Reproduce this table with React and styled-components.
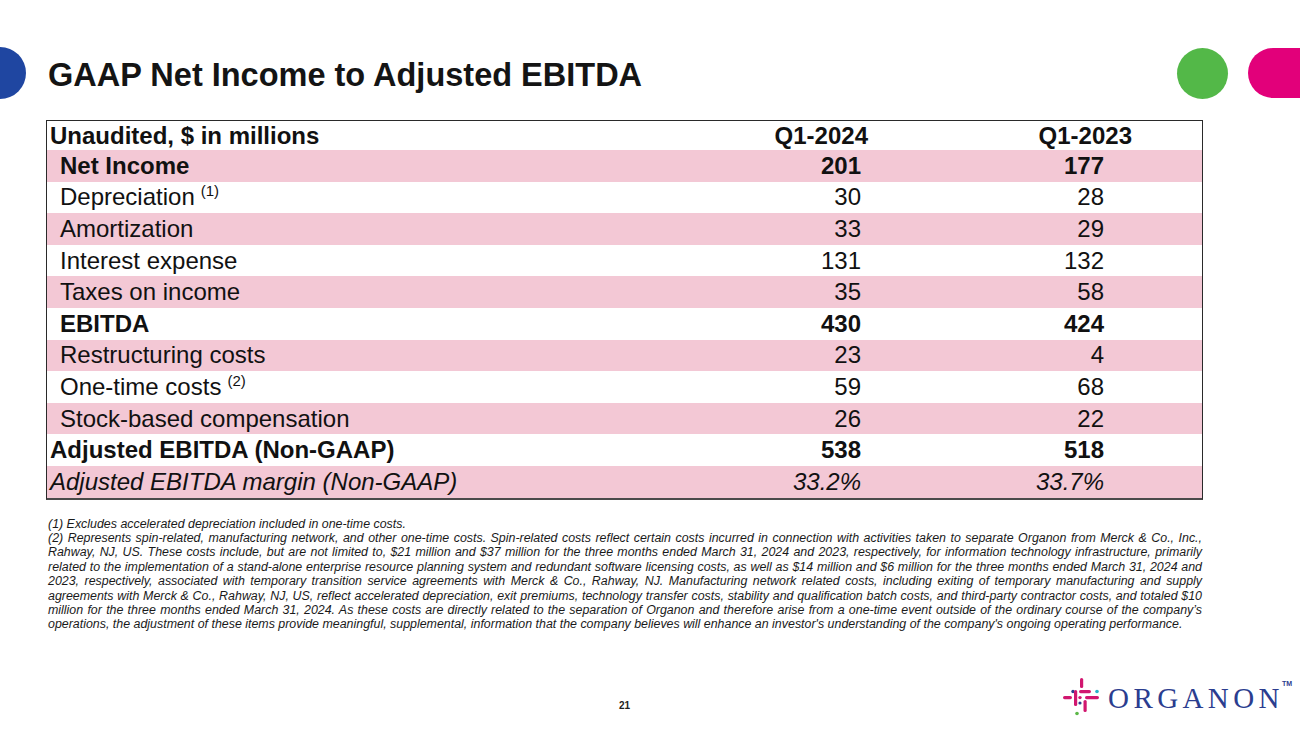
import React from 'react';
import styled, { createGlobalStyle } from 'styled-components';

const GlobalStyle = createGlobalStyle`
 html, body {
  margin: 0;
  padding: 0;
  background: #ffffff;
 }
 body {
  font-family: 'Liberation Sans', Arial, sans-serif;
  color: #111111;
 }
`;

const rows = [
 { label: 'Net Income', a: '201', b: '177', bold: true, pink: true, indent: true },
 { label: 'Depreciation', note: '(1)', a: '30', b: '28', indent: true },
 { label: 'Amortization', a: '33', b: '29', pink: true, indent: true },
 { label: 'Interest expense', a: '131', b: '132', indent: true },
 { label: 'Taxes on income', a: '35', b: '58', pink: true, indent: true },
 { label: 'EBITDA', a: '430', b: '424', bold: true, indent: true },
 { label: 'Restructuring costs', a: '23', b: '4', pink: true, indent: true },
 { label: 'One-time costs', note: '(2)', a: '59', b: '68', indent: true },
 { label: 'Stock-based compensation', a: '26', b: '22', pink: true, indent: true },
 { label: 'Adjusted EBITDA (Non-GAAP)', a: '538', b: '518', bold: true },
 { label: 'Adjusted EBITDA margin (Non-GAAP)', a: '33.2%', b: '33.7%', italic: true, pink: true },
];

export default function App() {
 return (
  <Page>
   <GlobalStyle />
   <Header>
    <BlueHalf />
    <Title>GAAP Net Income to Adjusted EBITDA</Title>
    <GreenDot />
    <PinkPill />
   </Header>

   <Table>
    <Row>
     <Label $bold>Unaudited, $ in millions</Label>
     <Value $bold $pad={84}>Q1-2024</Value>
     <Value $bold $pad={70}>Q1-2023</Value>
    </Row>
    {rows.map((r) => (
     <Row key={r.label} $pink={r.pink}>
      <Label $bold={r.bold} $italic={r.italic} $indent={r.indent}>
       {r.label}
       {r.note && <Sup>{r.note}</Sup>}
      </Label>
      <Value $bold={r.bold} $italic={r.italic} $pad={91}>{r.a}</Value>
      <Value $bold={r.bold} $italic={r.italic} $pad={98}>{r.b}</Value>
     </Row>
    ))}
   </Table>

   <Notes>
    <p>(1) Excludes accelerated depreciation included in one-time costs.</p>
    <p>
     (2) Represents spin-related, manufacturing network, and other one-time costs. Spin-related costs reflect certain
     costs incurred in connection with activities taken to separate Organon from Merck &amp; Co., Inc., Rahway, NJ, US.
     These costs include, but are not limited to, $21 million and $37 million for the three months ended March 31, 2024
     and 2023, respectively, for information technology infrastructure, primarily related to the implementation of a
     stand-alone enterprise resource planning system and redundant software licensing costs, as well as $14 million and
     $6 million for the three months ended March 31, 2024 and 2023, respectively, associated with temporary transition
     service agreements with Merck &amp; Co., Rahway, NJ. Manufacturing network related costs, including exiting of
     temporary manufacturing and supply agreements with Merck &amp; Co., Rahway, NJ, US, reflect accelerated
     depreciation, exit premiums, technology transfer costs, stability and qualification batch costs, and third-party
     contractor costs, and totaled $10 million for the three months ended March 31, 2024. As these costs are directly
     related to the separation of Organon and therefore arise from a one-time event outside of the ordinary course of
     the company’s operations, the adjustment of these items provide meaningful, supplemental, information that the
     company believes will enhance an investor's understanding of the company's ongoing operating performance.
    </p>
   </Notes>

   <Footer>
    <PageNum>21</PageNum>
    <Logo>
     <svg width="38" height="38" viewBox="0 0 38 38">
      <rect x="18" y="0" width="3.2" height="10" rx="1.6" fill="#d1166f" />
      <circle cx="11" cy="13.5" r="1.7" fill="#2b3d8f" />
      <rect x="17" y="12" width="12" height="3.2" rx="1.6" fill="#d1166f" />
      <circle cx="35" cy="13.5" r="1.8" fill="#27b3c9" />
      <rect x="1" y="18" width="9" height="3.2" rx="1.6" fill="#d1166f" />
      <circle cx="18" cy="19.6" r="1.7" fill="#d1166f" />
      <rect x="23" y="18" width="14" height="3.2" rx="1.6" fill="#d1166f" />
      <rect x="12" y="12" width="3.2" height="16" rx="1.6" fill="#d1166f" />
      <rect x="21.5" y="22" width="3.2" height="12" rx="1.6" fill="#d1166f" />
      <circle cx="18" cy="25" r="1.6" fill="#2b3d8f" />
      <circle cx="15" cy="35.5" r="1.8" fill="#5cb848" />
     </svg>
     <Wordmark>ORGANON</Wordmark>
     <Tm>TM</Tm>
    </Logo>
   </Footer>
  </Page>
 );
}

const Page = styled.div`
 width: 1300px;
 height: 731px;
 box-sizing: border-box;
 padding: 47px 0 13px;
 display: flex;
 flex-direction: column;
 overflow: hidden;
`;

const Header = styled.div`
 display: flex;
 align-items: center;
 height: 52px;
`;

const BlueHalf = styled.div`
 width: 26px;
 height: 52px;
 background: #1f46a1;
 border-radius: 0 26px 26px 0;
`;

const Title = styled.h1`
 flex: 1;
 margin: 4px 0 0 22px;
 font-size: 32.5px;
 line-height: 37px;
 font-weight: 700;
 color: #141414;
`;

const GreenDot = styled.div`
 width: 51px;
 height: 51px;
 border-radius: 50%;
 background: #53b848;
`;

const PinkPill = styled.div`
 width: 52px;
 height: 50px;
 margin-left: 20px;
 background: #e2007a;
 border-radius: 25px 0 0 25px;
`;

const Table = styled.div`
 margin: 21px 0 0 46px;
 width: 1157px;
 box-sizing: border-box;
 border: 1px solid #2a2a2a;
 border-bottom: 2px solid #4a4a4a;
`;

const Row = styled.div`
 display: grid;
 grid-template-columns: 1fr 250px 250px;
 align-items: center;
 height: 31.6px;
 background: ${(p) => (p.$pink ? '#f3c8d5' : '#ffffff')};
 &:first-child {
  height: 29px;
 }
`;

const Label = styled.div`
 padding-left: ${(p) => (p.$indent ? 13 : 3)}px;
 font-size: 24px;
 line-height: 28px;
 font-weight: ${(p) => (p.$bold ? 700 : 400)};
 font-style: ${(p) => (p.$italic ? 'italic' : 'normal')};
 white-space: nowrap;
`;

const Value = styled.div`
 text-align: right;
 padding-right: ${(p) => p.$pad}px;
 font-size: 24px;
 line-height: 28px;
 font-weight: ${(p) => (p.$bold ? 700 : 400)};
 font-style: ${(p) => (p.$italic ? 'italic' : 'normal')};
`;

const Sup = styled.span`
 font-size: 15px;
 line-height: 0;
 vertical-align: 9px;
 margin-left: 6px;
`;

const Notes = styled.div`
 margin: 17px 0 0 48px;
 width: 1154px;
 font-family: 'Liberation Sans Narrow', 'Liberation Sans', Arial, sans-serif;
 font-style: italic;
 font-size: 12.42px;
 line-height: 14.4px;
 color: #1a1a1a;
 text-align: justify;
 p {
  margin: 0;
 }
`;

const Footer = styled.div`
 margin-top: auto;
 display: flex;
 align-items: flex-start;
 height: 40px;
`;

const PageNum = styled.div`
 margin: 22px 0 0 619px;
 font-size: 10px;
 font-weight: 700;
 color: #222;
`;

const Logo = styled.div`
 margin-left: auto;
 margin-right: 8px;
 display: flex;
 align-items: flex-start;
 color: #2b3d8f;
`;

const Wordmark = styled.span`
 margin: 4px 0 0 8px;
 font-family: 'Liberation Serif', 'DejaVu Serif', serif;
 font-size: 29px;
 line-height: 32px;
 letter-spacing: 4.4px;
`;

const Tm = styled.span`
 margin: 2px 0 0 -2px;
 font-size: 7px;
 font-weight: 700;
`;
